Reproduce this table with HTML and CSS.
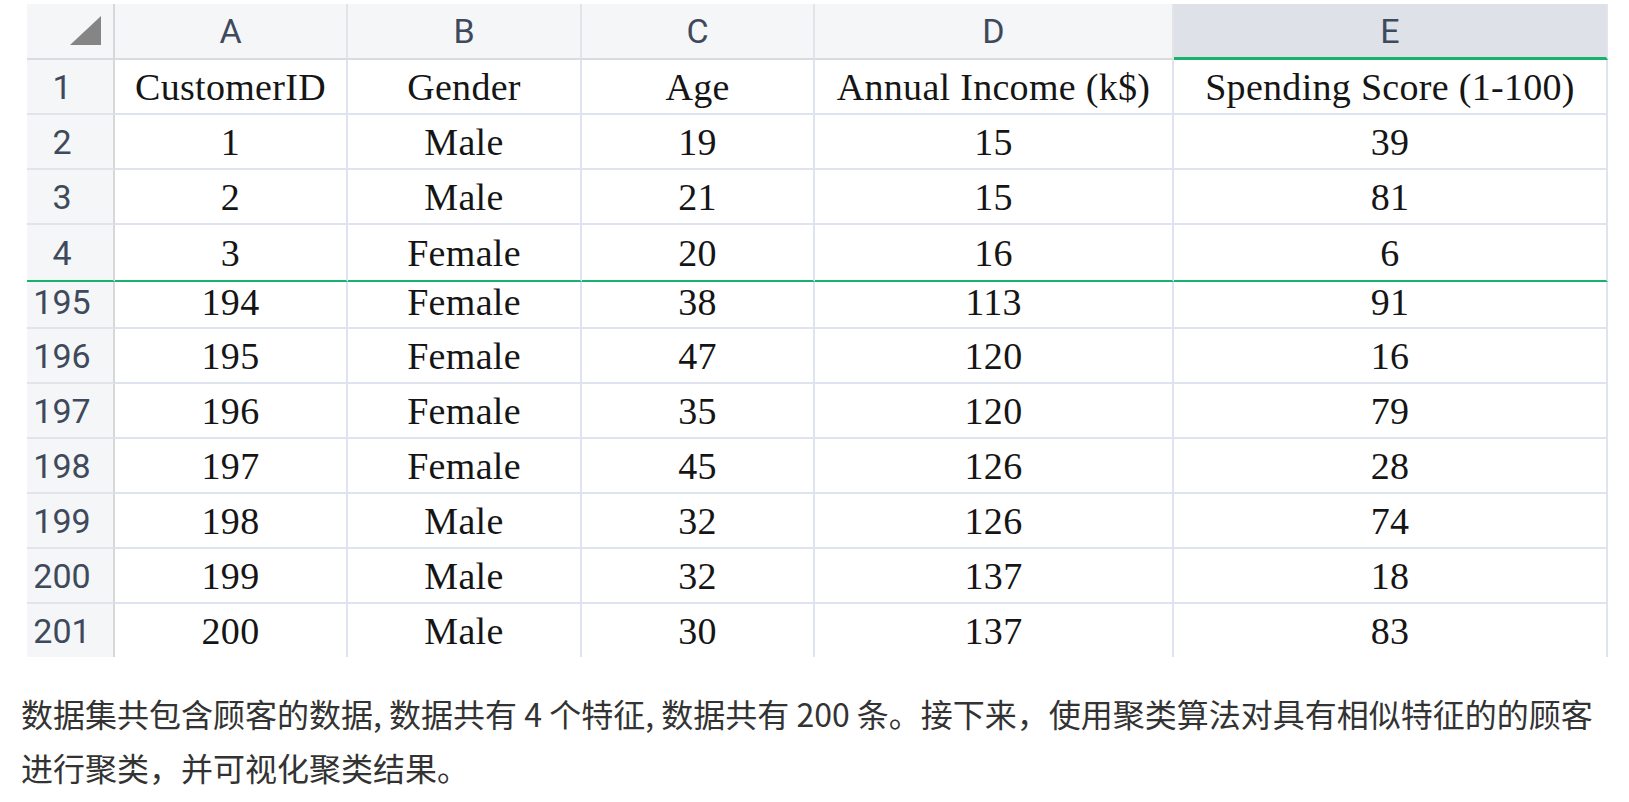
FILE: index.html
```html
<!DOCTYPE html>
<html lang="zh-CN">
<head>
<meta charset="utf-8">
<title>Mall Customers</title>
<link rel="stylesheet" href="styles.css">
</head>
<body>
<div class="sheet">
  <div class="corner"><svg width="31" height="29" viewBox="0 0 31 29"><polygon points="31,0 31,29 0,29" fill="#858585"/></svg></div>
  <div class="colhead">A</div>
  <div class="colhead">B</div>
  <div class="colhead">C</div>
  <div class="colhead">D</div>
  <div class="colhead selected">E</div>

  <div class="rowhead">1</div>
  <div class="cell">CustomerID</div>
  <div class="cell">Gender</div>
  <div class="cell">Age</div>
  <div class="cell">Annual Income (k$)</div>
  <div class="cell">Spending Score (1-100)</div>

  <div class="rowhead">2</div>
  <div class="cell">1</div><div class="cell">Male</div><div class="cell">19</div><div class="cell">15</div><div class="cell">39</div>

  <div class="rowhead">3</div>
  <div class="cell">2</div><div class="cell">Male</div><div class="cell">21</div><div class="cell">15</div><div class="cell">81</div>

  <div class="rowhead frozen">4</div>
  <div class="cell frozen">3</div><div class="cell frozen">Female</div><div class="cell frozen">20</div><div class="cell frozen">16</div><div class="cell frozen">6</div>

  <div class="rowhead partial">195</div>
  <div class="cell partial">194</div><div class="cell partial">Female</div><div class="cell partial">38</div><div class="cell partial">113</div><div class="cell partial">91</div>

  <div class="rowhead">196</div>
  <div class="cell">195</div><div class="cell">Female</div><div class="cell">47</div><div class="cell">120</div><div class="cell">16</div>

  <div class="rowhead">197</div>
  <div class="cell">196</div><div class="cell">Female</div><div class="cell">35</div><div class="cell">120</div><div class="cell">79</div>

  <div class="rowhead">198</div>
  <div class="cell">197</div><div class="cell">Female</div><div class="cell">45</div><div class="cell">126</div><div class="cell">28</div>

  <div class="rowhead">199</div>
  <div class="cell">198</div><div class="cell">Male</div><div class="cell">32</div><div class="cell">126</div><div class="cell">74</div>

  <div class="rowhead">200</div>
  <div class="cell">199</div><div class="cell">Male</div><div class="cell">32</div><div class="cell">137</div><div class="cell">18</div>

  <div class="rowhead last">201</div>
  <div class="cell last">200</div><div class="cell last">Male</div><div class="cell last">30</div><div class="cell last">137</div><div class="cell last">83</div>
</div>
<p class="desc">数据集共包含顾客的数据, 数据共有 4 个特征, 数据共有 200 条。接下来，使用聚类算法对具有相似特征的的顾客进行聚类，并可视化聚类结果。</p>
</body>
</html>
```

FILE: styles.css
```css
html, body {
  margin: 0;
  padding: 0;
  background: #ffffff;
}

.sheet {
  margin: 4px 0 0 27px;
  width: 1581px;
  display: grid;
  grid-template-columns: 88px 233px 234px 233px 359px 434px;
  grid-template-rows: 56px 55px 55px 55px 57px 47px 55px 55px 55px 55px 55px 53px;
}

.sheet > div {
  box-sizing: border-box;
  display: flex;
  align-items: center;
  justify-content: center;
  overflow: hidden;
  white-space: nowrap;
}

.corner {
  background: #f5f6f8;
  border-right: 2px solid #d6d8dc;
  border-bottom: 2px solid #d9dbdf;
  align-items: flex-start !important;
  justify-content: flex-end !important;
  padding: 12px 12px 0 0;
}

.colhead {
  background: #f5f6f8;
  border-right: 2px solid #e3e4e8;
  border-bottom: 2px solid #d9dbdf;
  font-family: Roboto, "Liberation Sans", sans-serif;
  font-size: 34px;
  font-weight: 400;
  color: #3e4a5c;
}

.colhead.selected {
  background: #dee1e8;
  border-right: 2px solid #e1e4ee;
  border-bottom: 3px solid #17b26b;
}

.rowhead {
  background: #f5f6f8;
  border-right: 2px solid #d6d8dc;
  border-bottom: 2px solid #e2e4e9;
  padding-right: 16px;
  font-family: Roboto, "Liberation Sans", sans-serif;
  font-size: 34px;
  font-weight: 400;
  color: #3e4a5c;
}

.cell {
  border-right: 2px solid #dfe3f0;
  border-bottom: 2px solid #dfe3f0;
  font-family: "Liberation Serif", "Times New Roman", serif;
  font-size: 38px;
  letter-spacing: 0.3px;
  color: #151515;
}

.frozen {
  border-bottom: 2px solid #17b26b !important;
}

.partial {
  padding-bottom: 6px;
}

.last {
  border-bottom: none !important;
}

.desc {
  margin: 29px 20px 0 21px;
  font-family: "Noto Sans CJK SC", "Noto Sans", sans-serif;
  font-size: 32px;
  line-height: 54px;
  color: #333333;
}
```
